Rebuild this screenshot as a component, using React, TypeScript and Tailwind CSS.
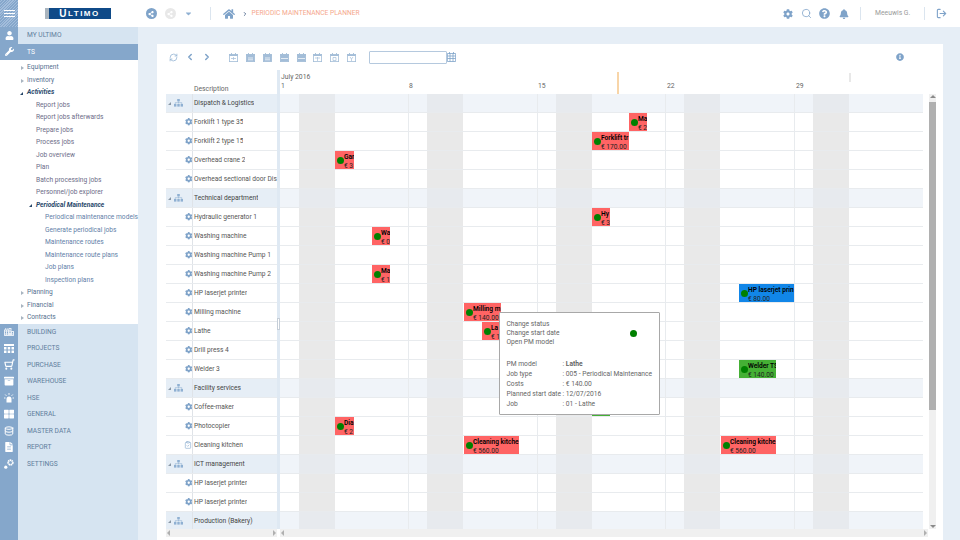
import type { ReactNode } from 'react';
import { ChevronLeft, ChevronRight, ClipboardCheck, Database, LogOut, RefreshCw, Search, ShoppingCart } from 'lucide-react';
import {
  FaArchive, FaBell, FaCaretDown, FaCity, FaCog, FaHome, FaQuestionCircle, FaShareAlt,
  FaThLarge, FaUser, FaWrench, FaInfoCircle, FaFileAlt,
} from 'react-icons/fa';

type Row = { name: string; group?: boolean; clipboard?: boolean };
type Bar = { row: number; x: number; w: number; color: string; title: string; price: string };

const ROWS: Row[] = [
  { name: 'Dispatch & Logistics', group: true },
  { name: 'Forklift 1 type 35' },
  { name: 'Forklift 2 type 15' },
  { name: 'Overhead crane 2' },
  { name: 'Overhead sectional door Dis' },
  { name: 'Technical department', group: true },
  { name: 'Hydraulic generator 1' },
  { name: 'Washing machine' },
  { name: 'Washing machine Pump 1' },
  { name: 'Washing machine Pump 2' },
  { name: 'HP laserjet printer' },
  { name: 'Milling machine' },
  { name: 'Lathe' },
  { name: 'Drill press 4' },
  { name: 'Welder 3' },
  { name: 'Facility services', group: true },
  { name: 'Coffee-maker' },
  { name: 'Photocopier' },
  { name: 'Cleaning kitchen', clipboard: true },
  { name: 'ICT management', group: true },
  { name: 'HP laserjet printer' },
  { name: 'HP laserjet printer' },
  { name: 'Production (Bakery)', group: true },
];

const RED = 'bg-[#ff6464]';
const BLUE = 'bg-[#1186e8]';
const GREEN = 'bg-[#45b035]';

// x is measured from the left edge of the chart (page x 280)
const BARS: Bar[] = [
  { row: 1, x: 349, w: 18, color: RED, title: 'Ma', price: '€ 2' },
  { row: 2, x: 312, w: 37, color: RED, title: 'Forklift tr', price: '€ 170.00' },
  { row: 3, x: 55, w: 19, color: RED, title: 'Gar', price: '€ 3' },
  { row: 6, x: 312, w: 18, color: RED, title: 'Hy', price: '€ 3' },
  { row: 7, x: 92, w: 18, color: RED, title: 'Wa', price: '€ 0' },
  { row: 9, x: 92, w: 18, color: RED, title: 'Ma', price: '€ 1' },
  { row: 10, x: 459, w: 55, color: BLUE, title: 'HP laserjet prin', price: '€ 80.00' },
  { row: 11, x: 184, w: 37, color: RED, title: 'Milling m', price: '€ 140.00' },
  { row: 12, x: 202, w: 19, color: RED, title: 'La', price: '€ 1' },
  { row: 14, x: 459, w: 37, color: GREEN, title: 'Welder TS', price: '€ 140.00' },
  { row: 16, x: 312, w: 18, color: GREEN, title: '', price: '' },
  { row: 17, x: 55, w: 19, color: RED, title: 'Dia', price: '€ 2' },
  { row: 18, x: 184, w: 55, color: RED, title: 'Cleaning kitche', price: '€ 560.00' },
  { row: 18, x: 441, w: 55, color: RED, title: 'Cleaning kitche', price: '€ 560.00' },
];

const WEEKENDS = [19, 147, 276, 404, 533];
const LINES = [128, 257, 385, 514];
const DAYS = [
  { label: '1', x: 1 },
  { label: '8', x: 129 },
  { label: '15', x: 258 },
  { label: '22', x: 387 },
  { label: '29', x: 516 },
];

const TREE: { label: string; level: 0 | 1 | 2; arrow?: 'open' | 'closed'; strong?: boolean }[] = [
  { label: 'Equipment', level: 0, arrow: 'closed' },
  { label: 'Inventory', level: 0, arrow: 'closed' },
  { label: 'Activities', level: 0, arrow: 'open', strong: true },
  { label: 'Report jobs', level: 1 },
  { label: 'Report jobs afterwards', level: 1 },
  { label: 'Prepare jobs', level: 1 },
  { label: 'Process jobs', level: 1 },
  { label: 'Job overview', level: 1 },
  { label: 'Plan', level: 1 },
  { label: 'Batch processing jobs', level: 1 },
  { label: 'Personnel/job explorer', level: 1 },
  { label: 'Periodical Maintenance', level: 1, arrow: 'open', strong: true },
  { label: 'Periodical maintenance models', level: 2 },
  { label: 'Generate periodical jobs', level: 2 },
  { label: 'Maintenance routes', level: 2 },
  { label: 'Maintenance route plans', level: 2 },
  { label: 'Job plans', level: 2 },
  { label: 'Inspection plans', level: 2 },
  { label: 'Planning', level: 0, arrow: 'closed' },
  { label: 'Financial', level: 0, arrow: 'closed' },
  { label: 'Contracts', level: 0, arrow: 'closed' },
];

function ProjectsIcon() {
  return (
    <svg width="10" height="9" viewBox="0 0 10 9" fill="#fff">
      <rect x="0" y="0" width="10" height="2" />
      <rect x="0" y="3" width="2.5" height="2.5" />
      <rect x="3.7" y="3" width="2.5" height="2.5" />
      <rect x="7.5" y="3" width="2.5" height="2.5" />
      <rect x="0" y="6.5" width="2.5" height="2.5" />
      <rect x="3.7" y="6.5" width="2.5" height="2.5" />
      <rect x="7.5" y="6.5" width="2.5" height="2.5" />
    </svg>
  );
}

function AlarmIcon() {
  return (
    <svg width="10" height="10" viewBox="0 0 10 10" fill="#fff" stroke="#fff">
      <path d="M2.5 9.5V6a2.5 2.5 0 0 1 5 0v3.5z" stroke="none" />
      <path d="M5 0v1.8M1.2 1.5l1.2 1.3M8.8 1.5 7.6 2.8M0 5h1.5M8.5 5H10" strokeWidth="0.9" fill="none" />
    </svg>
  );
}

function SettingsIcon() {
  return (
    <svg width="10" height="10" viewBox="0 0 10 10">
      <circle cx="6.5" cy="3.5" r="2.3" fill="none" stroke="#fff" strokeWidth="1.8" strokeDasharray="1.4 0.4" />
      <circle cx="1.8" cy="8.2" r="1.6" fill="#fff" />
    </svg>
  );
}

function OrgIcon() {
  return (
    <svg width="9" height="8" viewBox="0 0 9 8" fill="#8fb0d2">
      <rect x="3.2" y="0" width="2.6" height="2.4" />
      <path d="M4.5 2.4v2M1.2 5V3.7h6.6V5" stroke="#8fb0d2" strokeWidth="0.6" fill="none" />
      <rect x="0" y="5" width="2.4" height="2.6" />
      <rect x="3.3" y="5" width="2.4" height="2.6" />
      <rect x="6.6" y="5" width="2.4" height="2.6" />
    </svg>
  );
}

const SECTIONS: { label: string; icon: ReactNode }[] = [
  { label: 'BUILDING', icon: <FaCity size={10} color="#e8eef5" /> },
  { label: 'PROJECTS', icon: <ProjectsIcon /> },
  { label: 'PURCHASE', icon: <ShoppingCart size={11} color="#fff" strokeWidth={2.5} className="-scale-x-100" /> },
  { label: 'WAREHOUSE', icon: <FaArchive size={10} color="#fff" /> },
  { label: 'HSE', icon: <AlarmIcon /> },
  { label: 'GENERAL', icon: <FaThLarge size={10} color="#fff" /> },
  { label: 'MASTER DATA', icon: <Database size={10} color="#fff" strokeWidth={2.4} /> },
  { label: 'REPORT', icon: <FaFileAlt size={10} color="#fff" /> },
  { label: 'SETTINGS', icon: <SettingsIcon /> },
];

function NavRow({ icon, label, active }: { icon: ReactNode; label: string; active?: boolean }) {
  return (
    <div className={`flex h-[16.5px] items-center ${active ? 'bg-[#85a7cb] text-white' : 'bg-[#d6e4f1] text-[#5f7d9c]'}`}>
      <div className="flex h-full w-[18px] shrink-0 items-center justify-center bg-[#85a7cb]">{icon}</div>
      <span className="pl-[9px] pt-[2px] text-[6.65px]">{label}</span>
    </div>
  );
}

function TreeRow({ label, level, arrow, strong }: (typeof TREE)[number]) {
  const pad = level === 0 ? 'pl-[27px]' : level === 1 ? 'pl-[36px]' : 'pl-[45px]';
  const tone = strong
    ? 'font-bold italic text-[#27476a]'
    : level === 0
      ? 'text-[#56718f]'
      : level === 1
        ? 'text-[#6c6c88]'
        : 'text-[#5f80a8]';
  return (
    <div className={`relative flex h-[12.5px] items-center whitespace-nowrap pt-[1.5px] text-[6.65px] ${pad} ${tone}`}>
      {arrow === 'closed' && (
        <span className="absolute left-[21px] h-0 w-0 border-y-[2.5px] border-l-[3px] border-y-transparent border-l-[#a8b4c0]" />
      )}
      {arrow === 'open' && (
        <span
          className={`absolute ${level === 0 ? 'left-[20px]' : 'left-[29px]'} h-0 w-0 border-b-[3px] border-l-[3px] border-b-[#27476a] border-l-transparent`}
        />
      )}
      {label}
    </div>
  );
}

function CalIcon({ fill, glyph }: { fill?: boolean; glyph?: string }) {
  return (
    <svg width="9" height="9" viewBox="0 0 9 9">
      <rect x="0.4" y="1.4" width="8.2" height="7.2" fill={fill ? '#a3bdd8' : '#fff'} stroke="#a3bdd8" strokeWidth="0.8" />
      <rect x="0.4" y="1.4" width="8.2" height="1.6" fill="#a3bdd8" />
      <path d="M2.5 0v2M6.5 0v2" stroke="#a3bdd8" strokeWidth="0.9" />
      {glyph && <path d={glyph} stroke={fill ? '#fff' : '#a3bdd8'} strokeWidth="0.7" fill="none" />}
    </svg>
  );
}

function Triangle({ dir, color = '#8a8a8a' }: { dir: 'up' | 'down' | 'left' | 'right'; color?: string }) {
  const d = {
    up: 'M0 4 3 1l3 3z',
    down: 'M0 2l3 3 3-3z',
    left: 'M4 0 1 3l3 3z',
    right: 'M2 0l3 3-3 3z',
  }[dir];
  return (
    <svg width="6" height="6" viewBox="0 0 6 6" fill={color}>
      <path d={d} />
    </svg>
  );
}

function Header() {
  return (
    <header className="flex h-[27px] shrink-0 items-center bg-white">
      <div className="flex h-full w-[18px] items-center justify-center bg-[repeating-linear-gradient(135deg,#85a7cb_0px,#85a7cb_1px,#a3bddb_1px,#a3bddb_2px)]">
        <div className="flex w-[11px] flex-col gap-[1.5px]">
          <div className="h-[1.5px] bg-white" />
          <div className="h-[1.5px] bg-white" />
          <div className="h-[1.5px] bg-white" />
        </div>
      </div>
      <div className="ml-[26.5px] flex h-[11px] w-[66px] items-center justify-center border-l-[4.5px] border-[#a9b4be] bg-[#0f4a88] font-['Liberation_Sans',sans-serif] font-bold leading-none tracking-[1.5px] text-white">
        <span className="text-[10px]">U</span>
        <span className="text-[8px]">LTIMO</span>
      </div>
      <div className="ml-[35px] flex h-[11px] w-[11px] items-center justify-center rounded-full bg-[#7fa3c9]">
        <FaShareAlt size={6} color="#fff" />
      </div>
      <div className="ml-[8px] flex h-[11px] w-[11px] items-center justify-center rounded-full bg-[#e8e8e8]">
        <FaShareAlt size={6} color="#fff" />
      </div>
      <FaCaretDown size={9} color="#8fb0d2" className="ml-[8px]" />
      <div className="ml-[17px] h-[13px] w-px bg-[#dbe5ef]" />
      <FaHome size={12} color="#7fa3c9" className="ml-[12px]" />
      <ChevronRight size={6} color="#33507a" strokeWidth={3} className="ml-[7px]" />
      <span className="ml-[4px] text-[6.65px] text-[#f5a78c]">PERIODIC MAINTENANCE PLANNER</span>
      <div className="ml-auto flex items-center">
        <FaCog size={10} color="#7fa3c9" />
        <Search size={11} color="#7fa3c9" strokeWidth={1.7} className="ml-[8px]" />
        <FaQuestionCircle size={11} color="#7fa3c9" className="ml-[7px]" />
        <FaBell size={10} color="#7fa3c9" className="ml-[9px]" />
        <div className="ml-[11px] h-[13px] w-px bg-[#dbe5ef]" />
        <span className="ml-[14px] w-[36px] whitespace-nowrap text-[6.8px] text-[#9a9a9a]">Meeuwis G.</span>
        <div className="ml-[13px] h-[13px] w-px bg-[#dbe5ef]" />
        <LogOut size={11} color="#7fa3c9" strokeWidth={2.4} className="ml-[11px] mr-[13px]" />
      </div>
    </header>
  );
}

function Sidebar() {
  return (
    <aside className="flex w-[138px] shrink-0 flex-col bg-white">
      <NavRow icon={<FaUser size={9} color="#fff" />} label="MY ULTIMO" />
      <NavRow icon={<FaWrench size={9} color="#fff" />} label="TS" active />
      <div className="h-[1px]" />
      <div className="flex flex-col">
        {TREE.map((item) => (
          <TreeRow key={item.label} {...item} />
        ))}
      </div>
      {SECTIONS.map((s) => (
        <NavRow key={s.label} icon={s.icon} label={s.label} />
      ))}
      <div className="flex flex-1">
        <div className="w-[18px] bg-[#85a7cb]" />
        <div className="flex-1 bg-[#d6e4f1]" />
      </div>
    </aside>
  );
}

function Toolbar() {
  const glyphs: { fill?: boolean; glyph?: string }[] = [
    { glyph: 'M2 5.5h5M4.5 4v3' },
    { fill: true, glyph: 'M2 5h5M2 6.8h5' },
    { fill: true, glyph: 'M2 5h5M2 6.8h5' },
    { fill: true, glyph: 'M1 5.5h7' },
    { fill: true, glyph: 'M1 5.5h7' },
    { glyph: 'M2 5h5M4.5 4v4' },
    { glyph: 'M3 4.5h3v3H3z' },
    { glyph: 'M3 4l1.5 2L6 4M4.5 6v2' },
  ];
  return (
    <div className="flex h-[26px] shrink-0 items-center pl-[3px]">
      <RefreshCw size={9} color="#8fb0d2" strokeWidth={2} />
      <ChevronLeft size={10} color="#7fa3c9" strokeWidth={3.5} className="ml-[7px]" />
      <ChevronRight size={10} color="#7fa3c9" strokeWidth={3.5} className="ml-[7px]" />
      <div className="ml-[17px] flex gap-[7.9px]">
        {glyphs.map((g, i) => (
          <CalIcon key={i} {...g} />
        ))}
      </div>
      <div className="ml-[12.5px] h-[13px] w-[78px] rounded-[1px] border border-[#b5c9de] bg-white" />
      <svg width="9" height="10" viewBox="0 0 9 10" className="ml-[0.5px]" fill="none" stroke="#7fa3c9" strokeWidth="0.8">
        <path d="M2.5 0v2M6.5 0v2" />
        <path d="M.4 1.5h8.2v8H.4zM.4 4h8.2M.4 6.5h8.2M3 1.5v8M6 1.5v8" />
      </svg>
      <FaInfoCircle size={8} color="#7fa3c9" className="ml-auto mr-[32px]" />
    </div>
  );
}

function TimelineHeader() {
  return (
    <div className="flex h-[24px] shrink-0">
      <div className="flex w-[111px] items-end pl-[28px] text-[6.8px] leading-[10px] text-[#666]">Description</div>
      <div className="w-[3px] bg-[#dfe9f3]" />
      <div className="relative flex-1 text-[6.8px] text-[#666]">
        <span className="absolute left-[1px] top-[3px] leading-[9px]">July 2016</span>
        {DAYS.map((d) => (
          <span key={d.label} className="absolute top-[12px] leading-[9px]" style={{ left: d.x }}>
            {d.label}
          </span>
        ))}
        <div className="absolute bottom-0 left-[337px] top-[2px] w-[1.5px] bg-[#f8d5a8]" />
        <div className="absolute left-[569px] top-[3px] h-[9px] w-[2px] bg-[#e8e8e8]" />
      </div>
    </div>
  );
}

function LeftRow({ row }: { row: Row }) {
  return (
    <div
      className={`flex h-[19px] items-center border-b border-[#e8ebee] text-[6.65px] ${
        row.group ? 'bg-[#e6eef6] text-[#444]' : 'bg-white text-[#555]'
      }`}
    >
      <div className="flex h-full w-[27px] shrink-0 items-center justify-end border-r border-[#dfe3e8]">
        {row.group ? (
          <>
            <span className="mr-[3px] h-0 w-0 border-b-[3px] border-l-[3px] border-b-[#8a98a6] border-l-transparent" />
            <div className="mr-[9px]">
              <OrgIcon />
            </div>
          </>
        ) : row.clipboard ? (
          <ClipboardCheck size={8} color="#8fb0d2" />
        ) : (
          <FaCog size={7.5} color="#7fa3c9" />
        )}
      </div>
      <span className="overflow-hidden whitespace-nowrap pl-[1px] pt-[2px]">{row.name}</span>
    </div>
  );
}

function ChartRow({ group }: { group?: boolean }) {
  return (
    <div className={`relative h-[19px] border-b border-[#e8ebee] ${group ? 'bg-[#f0f4f9]' : 'bg-white'}`}>
      {WEEKENDS.map((x) => (
        <div
          key={x}
          className={`absolute inset-y-0 w-[36px] ${group ? 'bg-[#e7eaee]' : 'bg-[#e9e9e9]'}`}
          style={{ left: x }}
        />
      ))}
      {LINES.map((x) => (
        <div key={x} className="absolute inset-y-0 w-px bg-[#e8ebee]" style={{ left: x }} />
      ))}
    </div>
  );
}

function BarItem({ bar }: { bar: Bar }) {
  return (
    <div
      className={`absolute h-[18px] overflow-hidden whitespace-nowrap text-[6.6px] leading-[8px] ${bar.color}`}
      style={{ left: bar.x, top: bar.row * 19, width: bar.w }}
    >
      <div className="absolute left-[2px] top-[5.5px] h-[7px] w-[7px] rounded-full bg-[#008000]" />
      <div className="pl-[9px] pt-[1.5px] font-semibold text-black">{bar.title}</div>
      <div className="pl-[9px] pt-[1px] text-[#222]">{bar.price}</div>
    </div>
  );
}

function JobPopup() {
  const details = [
    ['PM model', 'Lathe'],
    ['Job type', '005 - Periodical Maintenance'],
    ['Costs', '€ 140.00'],
    ['Planned start date', '12/07/2016'],
    ['Job', '01 - Lathe'],
  ];
  return (
    <div className="absolute left-[218.5px] top-[217.5px] h-[103px] w-[161.5px] rounded-[1px] border border-[#a8a8a8] bg-white px-[7px] pt-[7px] text-[6.7px] leading-[9px] text-[#666]">
      <div>Change status</div>
      <div>Change start date</div>
      <div>Open PM model</div>
      <div className="absolute left-[130px] top-[17px] h-[7px] w-[7px] rounded-full bg-[#008000]" />
      <div className="mt-[12px] grid grid-cols-[56px_1fr] leading-[10px]">
        {details.map(([k, v], i) => (
          <div key={k} className="contents">
            <span className="whitespace-nowrap">{k}</span>
            <span className="whitespace-nowrap">
              : <span className={i === 0 ? 'font-bold' : ''}>{v}</span>
            </span>
          </div>
        ))}
      </div>
    </div>
  );
}

export default function App() {
  return (
    <div className="flex h-[540px] w-[960px] flex-col overflow-hidden bg-[#e6eef6] font-['Roboto',sans-serif]">
      <Header />
      <div className="flex min-h-0 flex-1">
        <Sidebar />
        <main className="ml-[19px] mr-[17px] mt-[17px] flex min-w-0 flex-1 flex-col bg-white pl-[9px] pr-[7px]">
          <Toolbar />
          <TimelineHeader />
          <div className="flex h-[435px] shrink-0">
            <div className="w-[111px] shrink-0 overflow-hidden">
              {ROWS.map((r, i) => (
                <LeftRow key={i} row={r} />
              ))}
            </div>
            <div className="relative w-[3px] shrink-0 bg-[#dfe9f3]">
              <div className="absolute left-0 top-[224px] flex h-[12px] w-[3px] items-center border border-[#c5ced8] bg-white" />
            </div>
            <div className="relative w-[643px] shrink-0 overflow-hidden">
              {ROWS.map((r, i) => (
                <ChartRow key={i} group={r.group} />
              ))}
              {BARS.map((b, i) => (
                <BarItem key={i} bar={b} />
              ))}
              <JobPopup />
            </div>
            <div className="ml-[6px] flex w-[7px] shrink-0 flex-col items-center bg-[#f0f0f0]">
              <Triangle dir="up" />
              <div className="mt-[2px] h-[308px] w-full bg-[#b0b0b0]" />
              <div className="mt-auto">
                <Triangle dir="down" />
              </div>
            </div>
          </div>
          <div className="flex h-[8px] shrink-0">
            <div className="flex w-[111px] items-center justify-between bg-[#f0f0f0]">
              <Triangle dir="left" color="#b0b0b0" />
              <Triangle dir="right" color="#b0b0b0" />
            </div>
            <div className="w-[3px]" />
            <div className="flex w-[648px] items-center justify-between bg-[#f0f0f0]">
              <Triangle dir="left" color="#b0b0b0" />
              <Triangle dir="right" color="#b0b0b0" />
            </div>
          </div>
        </main>
      </div>
    </div>
  );
}
